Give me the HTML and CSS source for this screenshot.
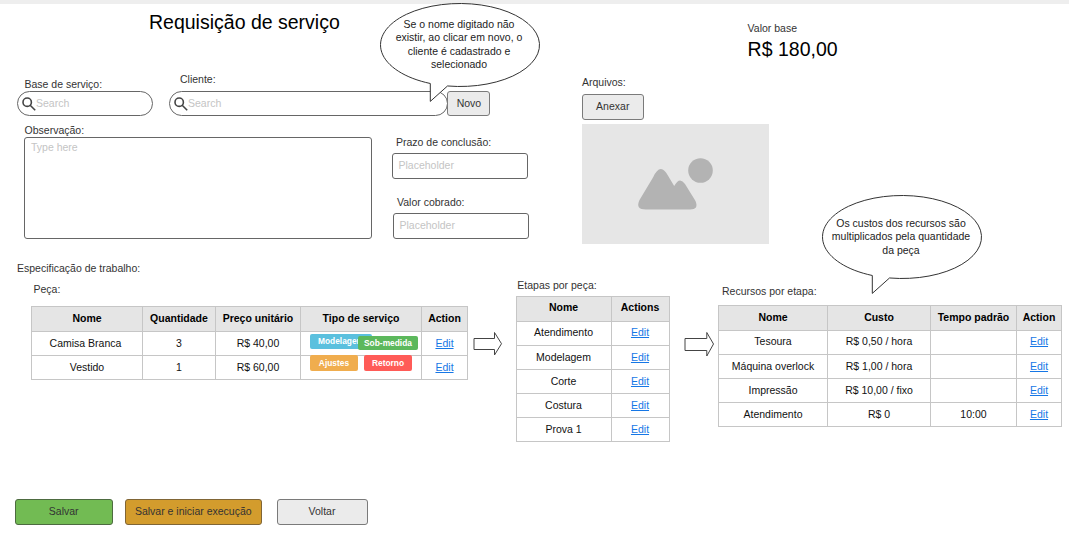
FILE: index.html
```html
<!DOCTYPE html>
<html lang="pt-BR">
<head>
<meta charset="utf-8">
<title>Requisição de serviço</title>
<link rel="stylesheet" href="styles.css">
</head>
<body>
<main class="page">
  <section class="top">
    <div class="form">
      <h1 class="title">Requisição de serviço</h1>
      <div class="search-row">
        <div class="field">
          <label class="label label-base">Base de serviço:</label>
          <div class="search search-base">
            <svg class="icon" viewBox="0 0 14 14"><circle cx="5.2" cy="5.2" r="4.2"/><path d="M8.2 8.2L13.200 13.200"/></svg>
            <span>Search</span>
          </div>
        </div>
        <div class="field">
          <label class="label label-client">Cliente:</label>
          <div class="search search-client">
            <svg class="icon" viewBox="0 0 14 14"><circle cx="5.2" cy="5.2" r="4.2"/><path d="M8.2 8.2L13.200 13.200"/></svg>
            <span>Search</span>
          </div>
        </div>
        <button class="btn btn-new">Novo</button>
      </div>
      <div class="details">
        <div class="notes">
          <label class="label label-notes">Observação:</label>
          <div class="textarea">Type here</div>
        </div>
        <div class="side">
          <label class="label label-due">Prazo de conclusão:</label>
          <div class="input">Placeholder</div>
          <label class="label label-charged">Valor cobrado:</label>
          <div class="input input-charged">Placeholder</div>
        </div>
      </div>
    </div>
    <div class="files">
      <span class="label">Arquivos:</span>
      <button class="btn btn-attach">Anexar</button>
      <svg class="picture" viewBox="0 0 187 120">
        <path d="M57.500 76L71 53.500Q78.500 37 86.500 52.500L92.200 62Q97.500 52 103 60L113.500 77Q117 85.500 108 85.500H64Q53 85.500 57.500 76Z"/>
        <circle cx="118.500" cy="46.500" r="12.300"/>
      </svg>
    </div>
    <div class="price">
      <span class="label">Valor base</span>
      <span class="amount">R$ 180,00</span>
    </div>
  </section>

  <section class="work">
    <div class="pieces">
      <span class="label label-spec">Especificação de trabalho:</span>
      <span class="label label-piece">Peça:</span>
      <table class="table table-pieces">
        <colgroup><col class="w111"><col class="w73"><col class="w85"><col class="w121"><col class="w46"></colgroup>
        <tr><th>Nome</th><th>Quantidade</th><th>Preço unitário</th><th>Tipo de serviço</th><th>Action</th></tr>
        <tr><td class="piece-name">Camisa Branca</td><td>3</td><td>R$ 40,00</td><td class="tags"><span class="tag tag-model">Modelagem</span><span class="tag tag-custom">Sob-medida</span></td><td><a href="#">Edit</a></td></tr>
        <tr><td>Vestido</td><td>1</td><td>R$ 60,00</td><td class="tags"><span class="tag tag-adjust">Ajustes</span><span class="tag tag-return">Retorno</span></td><td><a href="#">Edit</a></td></tr>
      </table>
    </div>
    <svg class="arrow arrow-one" viewBox="0 0 30 26"><path d="M1 7.500H21.500V1.500L28.500 12.700L21.500 24V18.500H1Z"/></svg>
    <div class="steps">
      <span class="label label-steps">Etapas por peça:</span>
      <table class="table table-steps">
        <colgroup><col class="w95"><col class="w58"></colgroup>
        <tr><th>Nome</th><th>Actions</th></tr>
        <tr class="first"><td>Atendimento</td><td><a href="#">Edit</a></td></tr>
        <tr><td>Modelagem</td><td><a href="#">Edit</a></td></tr>
        <tr><td>Corte</td><td><a href="#">Edit</a></td></tr>
        <tr><td>Costura</td><td><a href="#">Edit</a></td></tr>
        <tr><td>Prova 1</td><td><a href="#">Edit</a></td></tr>
      </table>
    </div>
    <svg class="arrow arrow-two" viewBox="0 0 30 26"><path d="M1 7.500H22.800V1.500L29.500 13L22.800 25V19.500H1Z"/></svg>
    <div class="resources">
      <span class="label label-resources">Recursos por etapa:</span>
      <table class="table table-resources">
        <colgroup><col class="w109"><col class="w103"><col class="w86"><col class="w45"></colgroup>
        <tr><th>Nome</th><th>Custo</th><th>Tempo padrão</th><th>Action</th></tr>
        <tr class="first"><td>Tesoura</td><td>R$ 0,50 / hora</td><td></td><td><a href="#">Edit</a></td></tr>
        <tr><td>Máquina overlock</td><td>R$ 1,00 / hora</td><td></td><td><a href="#">Edit</a></td></tr>
        <tr><td>Impressão</td><td>R$ 10,00 / fixo</td><td></td><td><a href="#">Edit</a></td></tr>
        <tr><td>Atendimento</td><td>R$ 0</td><td>10:00</td><td><a href="#">Edit</a></td></tr>
      </table>
    </div>
  </section>

  <footer class="actions">
    <button class="btn btn-save">Salvar</button>
    <button class="btn btn-run">Salvar e iniciar execução</button>
    <button class="btn btn-back">Voltar</button>
  </footer>

  <aside class="bubble bubble-client">
    <svg class="bubble-shape" viewBox="0 0 160 100"><path d="M50.300 80.490A79.500 41.500 0 1 1 67.500 82.980L50.300 98.400Z"/></svg>
    <p class="bubble-text">Se o nome digitado não<br>existir, ao clicar em novo, o<br>cliente é cadastrado e<br>selecionado</p>
  </aside>
  <aside class="bubble bubble-cost">
    <svg class="bubble-shape" viewBox="0 0 160 100"><path d="M50.300 80.490A79.500 41.500 0 1 1 67.500 82.980L50.300 98.400Z"/></svg>
    <p class="bubble-text">Os custos dos recursos são<br>multiplicados pela quantidade<br>da peça</p>
  </aside>
</main>
</body>
</html>
```

FILE: styles.css
```css
* { box-sizing: border-box; }
body {
  margin: 0;
  background: #fff;
  font-family: "Liberation Sans", Arial, sans-serif;
  font-size: 10.5px;
  line-height: 14px;
  color: #333;
}
.page {
  position: relative;
  width: 1069px;
  height: 535px;
  border-top: 4px solid #eee;
}
.label { display: block; height: 14px; white-space: nowrap; }

/* Request form */
.top { display: flex; height: 257px; }
.form { width: 582px; padding-top: 6px; }
.title {
  margin: 0 0 0 149px;
  height: 24px;
  font-size: 19.5px;
  line-height: 24px;
  font-weight: 400;
  color: #000;
}
.search-row { display: flex; align-items: flex-end; height: 82px; padding-left: 17px; }
.search {
  display: flex;
  align-items: center;
  height: 25px;
  padding: 0 0 2px 4px;
  border: 1px solid #666;
  border-radius: 13px;
  color: #c4c4c4;
}
.search-base { width: 136px; margin-right: 16px; }
.search-client { width: 279px; }
.label-base { margin-left: 7.500px; }
.label-client { margin: 0 0 5px 11px; }
.icon { width: 14px; height: 14px; margin: 2px 0 0; fill: none; stroke: #444; stroke-width: 1.600; }
.btn {
  display: flex;
  align-items: center;
  justify-content: center;
  height: 26px;
  padding: 0 0 3px;
  border: 1px solid #7a7a7a;
  border-radius: 3px;
  background: #ebebeb;
  color: #333;
  font: inherit;
}
.btn-new { width: 43px; height: 25px; margin-left: -0.600px; padding-bottom: 2px; }
.details { display: flex; padding: 7px 0 0 24px; }
.label-notes { margin-left: 0.600px; }
.notes { width: 368px; }
.textarea {
  width: 348px;
  height: 102px;
  padding: 2px 6px;
  border: 1px solid #666;
  border-radius: 3px;
  color: #c4c4c4;
}
.side { padding-top: 12px; }
.label-due { margin: 0 0 4px 4px; }
.input {
  display: flex;
  align-items: center;
  width: 136px;
  height: 26px;
  padding: 0 0 2px 5.5px;
  border: 1px solid #666;
  border-radius: 3px;
  color: #c4c4c4;
}
.label-charged { margin: 16px 0 4px 5px; }
.input-charged { margin-left: 1px; }
.files { width: 165.600px; padding-top: 71px; }
.btn-attach { width: 61.5px; margin: 5px 0 4px; }
.picture { display: block; width: 187px; height: 120px; background: #e6e6e6; fill: #b3b3b3; }
.price { padding-top: 17px; }
.amount { display: block; margin-top: 2px; font-size: 19.5px; line-height: 24px; color: #000; }

/* Work breakdown */
.work { display: flex; align-items: flex-start; height: 238px; }
.pieces { width: 474px; padding-left: 17px; }
.label-piece { margin: 7px 0 10px 16.5px; }
.table {
  table-layout: fixed;
  border-collapse: separate;
  border-spacing: 0;
  border: solid #c6c6c6;
  border-width: 1px 0 0 1px;
  color: #111;
}
th, td {
  height: 24px;
  padding: 0 0 1px;
  border: solid #c6c6c6;
  border-width: 0 1px 1px 0;
  text-align: center;
  white-space: nowrap;
}
th { height: 25px; padding-bottom: 2px; background: #e5e5e5; color: #000; }
.first td { padding-bottom: 3px; }
a { color: #1677e6; }
.table-pieces { width: 437px; margin-left: 14px; }
.w111 { width: 111px; } .w73 { width: 73px; } .w85 { width: 85px; }
.w121 { width: 121px; } .w46 { width: 46px; } .w95 { width: 95px; }
.w58 { width: 58px; } .w109 { width: 109px; } .w103 { width: 103px; }
.w86 { width: 86px; } .w45 { width: 45px; }
.piece-name { padding-right: 3px; }
.tags { position: relative; }
.tag {
  position: absolute;
  border-radius: 2px;
  color: #fff;
  font-size: 8.400px;
  font-weight: 700;
  text-align: center;
}
.tag-model { left: 9px; top: 2px; width: 62px; height: 15px; background: #5bc0de; }
.tag-custom { left: 57px; top: 4px; width: 60px; height: 14px; background: #5cb85c; }
.tag-adjust { left: 9px; top: -1px; width: 48px; height: 16px; line-height: 17px; background: #f0ad4e; }
.tag-return { left: 63px; top: -1px; width: 48px; height: 16px; line-height: 17px; background: #ff5b57; }
.arrow { width: 30px; height: 26px; fill: #fff; stroke: #444; stroke-width: 1; }
.arrow-one { margin: 70px 12px 0 -1px; }
.steps { width: 168px; padding-top: 17px; }
.label-steps { margin: 0 0 4px 2.300px; }
.table-steps { width: 154px; margin-left: 1px; }
.table-steps th { padding-bottom: 4px; }
.table-steps th, .table-steps td { padding-right: 1px; }
.arrow-two { margin: 70px 4px 0 1px; }
.resources { padding-top: 23px; }
.label-resources { margin: 0 0 7px 4px; }
.table-resources { width: 344px; }

/* Bottom buttons */
.actions { display: flex; padding-left: 14.5px; }
.btn-save { width: 98.5px; margin-right: 12px; background: #72bb53; border-color: #4d6b40; }
.btn-run { width: 136.5px; margin-right: 15px; background: #d39c2d; border-color: #806535; }
.btn-back { width: 91px; }

/* Annotation balloons over the form */
.bubble { position: absolute; width: 160px; height: 100px; }
.bubble-shape { display: block; width: 160px; height: 100px; overflow: visible; fill: #fff; stroke: #333; stroke-width: 1; }
.bubble-text {
  position: absolute;
  inset: 14.600px 0 auto;
  margin: 0;
  line-height: 13.600px;
  text-align: center;
  color: #222;
}
.bubble-client { left: 380px; top: -1px; }
.bubble-client .bubble-text { right: 2px; }
.bubble-cost { left: 822px; top: 191px; }
.bubble-cost .bubble-text { inset: 21.700px 2px auto 0; }
```
